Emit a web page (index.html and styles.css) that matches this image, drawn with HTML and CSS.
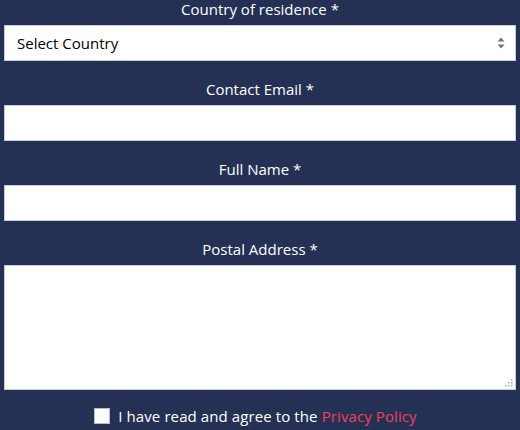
FILE: index.html
```html
<!DOCTYPE html>
<html lang="en">
<head>
<meta charset="utf-8">
<title>Form</title>
<link rel="stylesheet" href="styles.css">
</head>
<body>
<form class="form">
  <div class="field">
    <label class="label" for="country">Country of residence *</label>
    <div class="select-wrap">
      <select id="country" class="control select">
        <option>Select Country</option>
      </select>
      <svg class="select-arrows" width="8" height="12" viewBox="0 0 8 12" aria-hidden="true">
        <path d="M4 0.5 L7.5 4.5 L0.5 4.5 Z M4 11.5 L7.5 7.5 L0.5 7.5 Z" fill="#6f7686"/>
      </svg>
    </div>
  </div>
  <div class="field">
    <label class="label" for="email">Contact Email *</label>
    <input id="email" class="control" type="email">
  </div>
  <div class="field">
    <label class="label" for="name">Full Name *</label>
    <input id="name" class="control" type="text">
  </div>
  <div class="field">
    <label class="label" for="address">Postal Address *</label>
    <div class="textarea-wrap">
      <textarea id="address" class="control textarea"></textarea>
      <svg class="grip" width="9" height="9" viewBox="0 0 9 9" aria-hidden="true">
        <g fill="#a4a8b0">
          <rect x="7" y="1" width="1.5" height="1.5"/>
          <rect x="4" y="4" width="1.5" height="1.5"/>
          <rect x="7" y="4" width="1.5" height="1.5"/>
          <rect x="1" y="7" width="1.5" height="1.5"/>
          <rect x="4" y="7" width="1.5" height="1.5"/>
          <rect x="7" y="7" width="1.5" height="1.5"/>
        </g>
      </svg>
    </div>
  </div>
  <div class="agree">
    <span class="box"></span>
    <span class="agree-text">I have read and agree to the <a class="link" href="#">Privacy Policy</a></span>
  </div>
</form>
</body>
</html>
```
FILE: styles.css
```css
html, body {
  margin: 0;
  padding: 0;
  background: #243154;
}
body {
  font-family: "Open Sans", "Noto Sans", sans-serif;
  font-size: 15px;
  color: #ffffff;
}
.form {
  display: flex;
  flex-direction: column;
  padding: 0 4px;
}
.field {
  display: flex;
  flex-direction: column;
  margin-bottom: 19px;
}
.label {
  display: block;
  text-align: center;
  line-height: 18px;
  height: 18px;
  margin-bottom: 7px;
}
.control {
  box-sizing: border-box;
  width: 100%;
  height: 36px;
  margin: 0;
  border: 1px solid #c7ccd6;
  border-radius: 0;
  background: #ffffff;
  font-family: inherit;
  font-size: 15px;
  color: #000;
  padding: 0 12px;
  outline: none;
}
.select-wrap,
.textarea-wrap {
  position: relative;
}
.select {
  appearance: none;
  -webkit-appearance: none;
  display: block;
}
.select-arrows {
  position: absolute;
  right: 11px;
  top: 12px;
}
.textarea {
  height: 125px;
  resize: none;
  display: block;
}
.grip {
  position: absolute;
  right: 3px;
  bottom: 3px;
}
.agree {
  display: flex;
  justify-content: center;
  align-items: center;
  gap: 8px;
  margin-top: -4px;
  padding-right: 9px;
}
.box {
  box-sizing: border-box;
  width: 16px;
  height: 16px;
  background: #fff;
  border: 1px solid #b8bdc8;
}
.agree-text {
  line-height: 22px;
  letter-spacing: 0.1px;
}
.link {
  color: #f2405b;
  text-decoration: none;
}
```
